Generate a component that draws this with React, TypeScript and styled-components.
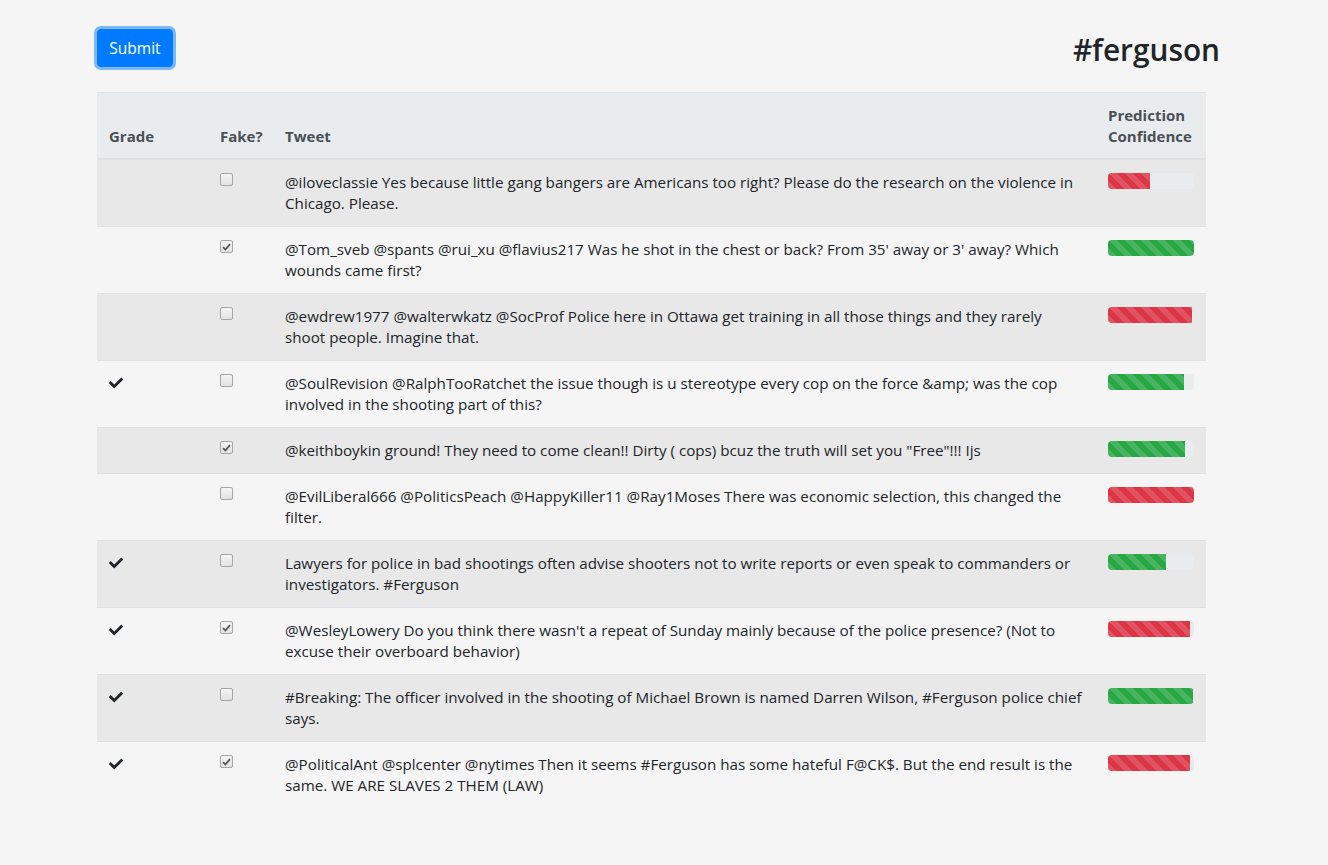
import React from "react";
import styled, { createGlobalStyle } from "styled-components";
import { FaCheck } from "react-icons/fa";

const GlobalStyle = createGlobalStyle`
  html, body { margin: 0; padding: 0; }
  body {
    background: #f5f5f5;
    font-family: "Open Sans", "Noto Sans", "Liberation Sans", sans-serif;
    color: #212529;
  }
`;

const Page = styled.div`
  padding: 29px 0 40px 97px;
`;

const Container = styled.div`
  width: 1123px;
`;

const TopBar = styled.div`
  display: flex;
  justify-content: space-between;
  align-items: flex-start;
  margin-bottom: 24px;
`;

const SubmitButton = styled.button`
  width: 76px;
  height: 38px;
  font-family: inherit;
  font-size: 15.5px;
  line-height: 24px;
  color: #fff;
  background: #007bff;
  border: 1px solid #007bff;
  border-radius: 4px;
  box-shadow: 0 0 0 3px rgba(0, 123, 255, 0.5);
  padding: 0;
  cursor: pointer;
`;

const Title = styled.h2`
  margin: 3px 0 0 0;
  font-size: 29.8px;
  font-weight: 600;
  line-height: 36px;
  color: #212529;
`;

const Table = styled.table`
  width: 1109px;
  table-layout: fixed;
  border-collapse: collapse;
  line-height: 21px;
`;

const HeadCell = styled.th`
  background: #e9ecef;
  color: #495057;
  font-size: 15px;
  font-weight: 700;
  text-align: left;
  vertical-align: bottom;
  padding: 12px 12px 11px;
  border-top: 1px solid #dee2e6;
  border-bottom: 2px solid #dee2e6;
`;

const Row = styled.tr<{ $odd: boolean }>`
  background: ${(p) => (p.$odd ? "rgba(0,0,0,0.05)" : "transparent")};
`;

const Cell = styled.td`
  padding: 12px;
  vertical-align: top;
  border-top: 1px solid #dee2e6;
  font-size: 15.2px;
`;

const GradeMark = styled.span`
  display: inline-flex;
  padding-top: 3px;
  color: #212529;
`;

const CheckBox = styled.span<{ $checked: boolean }>`
  display: inline-flex;
  align-items: center;
  justify-content: center;
  box-sizing: border-box;
  width: 13px;
  height: 13px;
  margin-top: 1px;
  border: 1px solid #a6a6a6;
  border-radius: 2px;
  background: linear-gradient(#f4f4f4, #e2e2e2);
  color: #555;
  vertical-align: top;
`;

const Progress = styled.div`
  height: 16px;
  margin-top: 1px;
  background: #e9ecef;
  border-radius: 4px;
  overflow: hidden;
  display: flex;
`;

const Bar = styled.div<{ $kind: "success" | "danger" }>`
  height: 100%;
  background-color: ${(p) => (p.$kind === "success" ? "#28a745" : "#dc3545")};
  background-image: linear-gradient(
    45deg,
    rgba(255, 255, 255, 0.15) 25%,
    transparent 25%,
    transparent 50%,
    rgba(255, 255, 255, 0.15) 50%,
    rgba(255, 255, 255, 0.15) 75%,
    transparent 75%,
    transparent
  );
  background-size: 16px 16px;
`;

type Item = {
  graded: boolean;
  fake: boolean;
  text: string;
  kind: "success" | "danger";
  pct: number;
};

const rows: Item[] = [
  { graded: false, fake: false, text: "@iloveclassie Yes because little gang bangers are Americans too right? Please do the research on the violence in Chicago. Please.", kind: "danger", pct: 49 },
  { graded: false, fake: true, text: "@Tom_sveb @spants @rui_xu @flavius217 Was he shot in the chest or back? From 35' away or 3' away? Which wounds came first?", kind: "success", pct: 100 },
  { graded: false, fake: false, text: "@ewdrew1977 @walterwkatz @SocProf Police here in Ottawa get training in all those things and they rarely shoot people. Imagine that.", kind: "danger", pct: 98 },
  { graded: true, fake: false, text: "@SoulRevision @RalphTooRatchet the issue though is u stereotype every cop on the force &amp; was the cop involved in the shooting part of this?", kind: "success", pct: 88 },
  { graded: false, fake: true, text: "@keithboykin ground! They need to come clean!! Dirty ( cops) bcuz the truth will set you \"Free\"!!! Ijs", kind: "success", pct: 90 },
  { graded: false, fake: false, text: "@EvilLiberal666 @PoliticsPeach @HappyKiller11 @Ray1Moses There was economic selection, this changed the filter.", kind: "danger", pct: 100 },
  { graded: true, fake: false, text: "Lawyers for police in bad shootings often advise shooters not to write reports or even speak to commanders or investigators. #Ferguson", kind: "success", pct: 67 },
  { graded: true, fake: true, text: "@WesleyLowery Do you think there wasn't a repeat of Sunday mainly because of the police presence? (Not to excuse their overboard behavior)", kind: "danger", pct: 95 },
  { graded: true, fake: false, text: "#Breaking: The officer involved in the shooting of Michael Brown is named Darren Wilson, #Ferguson police chief says.", kind: "success", pct: 99 },
  { graded: true, fake: true, text: "@PoliticalAnt @splcenter @nytimes Then it seems #Ferguson has some hateful F@CK$. But the end result is the same. WE ARE SLAVES 2 THEM (LAW)", kind: "danger", pct: 95 },
];

const SmallCheck = () => (
  <svg width="9" height="8" viewBox="0 0 9 8">
    <path d="M1 4.2 L3.4 6.5 L8 1.2" fill="none" stroke="currentColor" strokeWidth="1.8" />
  </svg>
);

export default function App() {
  return (
    <>
      <GlobalStyle />
      <Page>
        <Container>
          <TopBar>
            <SubmitButton>Submit</SubmitButton>
            <Title>#ferguson</Title>
          </TopBar>
          <Table>
            <colgroup>
              <col style={{ width: 111 }} />
              <col style={{ width: 65 }} />
              <col style={{ width: 823 }} />
              <col style={{ width: 110 }} />
            </colgroup>
            <thead>
              <tr>
                <HeadCell>Grade</HeadCell>
                <HeadCell>Fake?</HeadCell>
                <HeadCell>Tweet</HeadCell>
                <HeadCell>Prediction Confidence</HeadCell>
              </tr>
            </thead>
            <tbody>
              {rows.map((r, i) => (
                <Row key={i} $odd={i % 2 === 0}>
                  <Cell>
                    {r.graded && (
                      <GradeMark>
                        <FaCheck size={14} />
                      </GradeMark>
                    )}
                  </Cell>
                  <Cell>
                    <CheckBox $checked={r.fake}>{r.fake && <SmallCheck />}</CheckBox>
                  </Cell>
                  <Cell>{r.text}</Cell>
                  <Cell>
                    <Progress>
                      <Bar $kind={r.kind} style={{ width: `${r.pct}%` }} />
                    </Progress>
                  </Cell>
                </Row>
              ))}
            </tbody>
          </Table>
        </Container>
      </Page>
    </>
  );
}
